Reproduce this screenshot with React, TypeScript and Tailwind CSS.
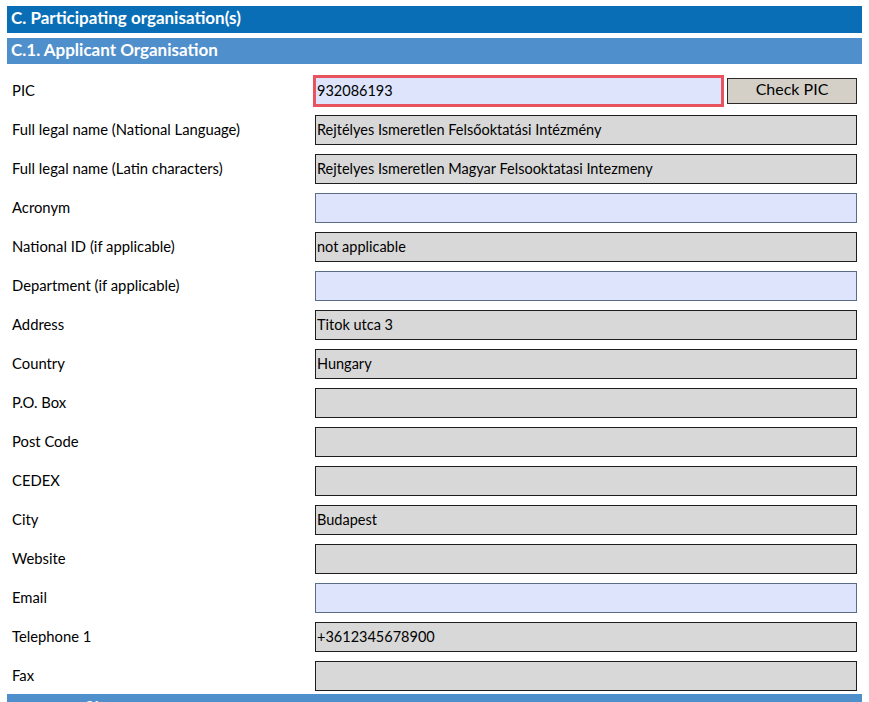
import React from "react";

type Row = { label: string; value?: string; kind: "gray" | "blue" | "pic" };

const rows: Row[] = [
  { label: "PIC", value: "932086193", kind: "pic" },
  { label: "Full legal name (National Language)", value: "Rejtélyes Ismeretlen Felsőoktatási Intézmény", kind: "gray" },
  { label: "Full legal name (Latin characters)", value: "Rejtelyes Ismeretlen Magyar Felsooktatasi Intezmeny", kind: "gray" },
  { label: "Acronym", kind: "blue" },
  { label: "National ID (if applicable)", value: "not applicable", kind: "gray" },
  { label: "Department (if applicable)", kind: "blue" },
  { label: "Address", value: "Titok utca 3", kind: "gray" },
  { label: "Country", value: "Hungary", kind: "gray" },
  { label: "P.O. Box", kind: "gray" },
  { label: "Post Code", kind: "gray" },
  { label: "CEDEX", kind: "gray" },
  { label: "City", value: "Budapest", kind: "gray" },
  { label: "Website", kind: "gray" },
  { label: "Email", kind: "blue" },
  { label: "Telephone 1", value: "+3612345678900", kind: "gray" },
  { label: "Fax", kind: "gray" },
];

export default function App() {
  return (
    <div
      className="w-[869px] h-[702px] overflow-hidden bg-white text-black"
      style={{ fontFamily: "Lato, 'Open Sans', sans-serif" }}
    >
      <div className="pl-[7px] pt-[6px] w-[862px]">
        <div className="h-[27px] bg-[#0a6eb6] text-white font-bold text-[17px] flex items-center pl-[4px] pb-[3px]">
          C. Participating organisation(s)
        </div>
        <div className="mt-[5px] h-[26px] bg-[#4f8fcb] text-white font-bold text-[17px] flex items-center pl-[4px] pb-[2px]">
          C.1. Applicant Organisation
        </div>
        <div className="mt-[7px]">
          {rows.map((r) => (
            <div key={r.label} className="h-[39px] flex items-center">
              <div className="w-[306px] pl-[5px] text-[14.8px] pb-[1px]">{r.label}</div>
              {r.kind === "pic" ? (
                <div className="flex items-center">
                  <div className="w-[411px] h-[32px] border-[3px] border-[#e8535f] bg-[#dde4fb] flex items-center pl-[1px] text-[14.5px]">
                    {r.value}
                  </div>
                  <div className="ml-[3px] w-[130px] h-[26px] border border-[#2a2a2a] bg-[#d4d0c8] flex items-center justify-center text-[16px] pb-[3px]">
                    Check PIC
                  </div>
                </div>
              ) : (
                <div
                  className={
                    r.kind === "blue"
                      ? "ml-[2px] w-[542px] h-[30px] border border-[#5d6c86] bg-[#dde4fc] flex items-center pl-[1px] text-[14.5px]"
                      : "ml-[2px] w-[542px] h-[30px] border border-[#1e1e1e] bg-[#d8d8d8] flex items-center pl-[1px] text-[14.5px]"
                  }
                >
                  {r.value}
                </div>
              )}
            </div>
          ))}
        </div>
        <div className="-mt-[1px] h-[20px] bg-[#4f8fcb] text-white font-bold text-[17px] pl-[4px] pt-[4px] leading-[20px]">
          C.1.1. Profile
        </div>
      </div>
    </div>
  );
}
